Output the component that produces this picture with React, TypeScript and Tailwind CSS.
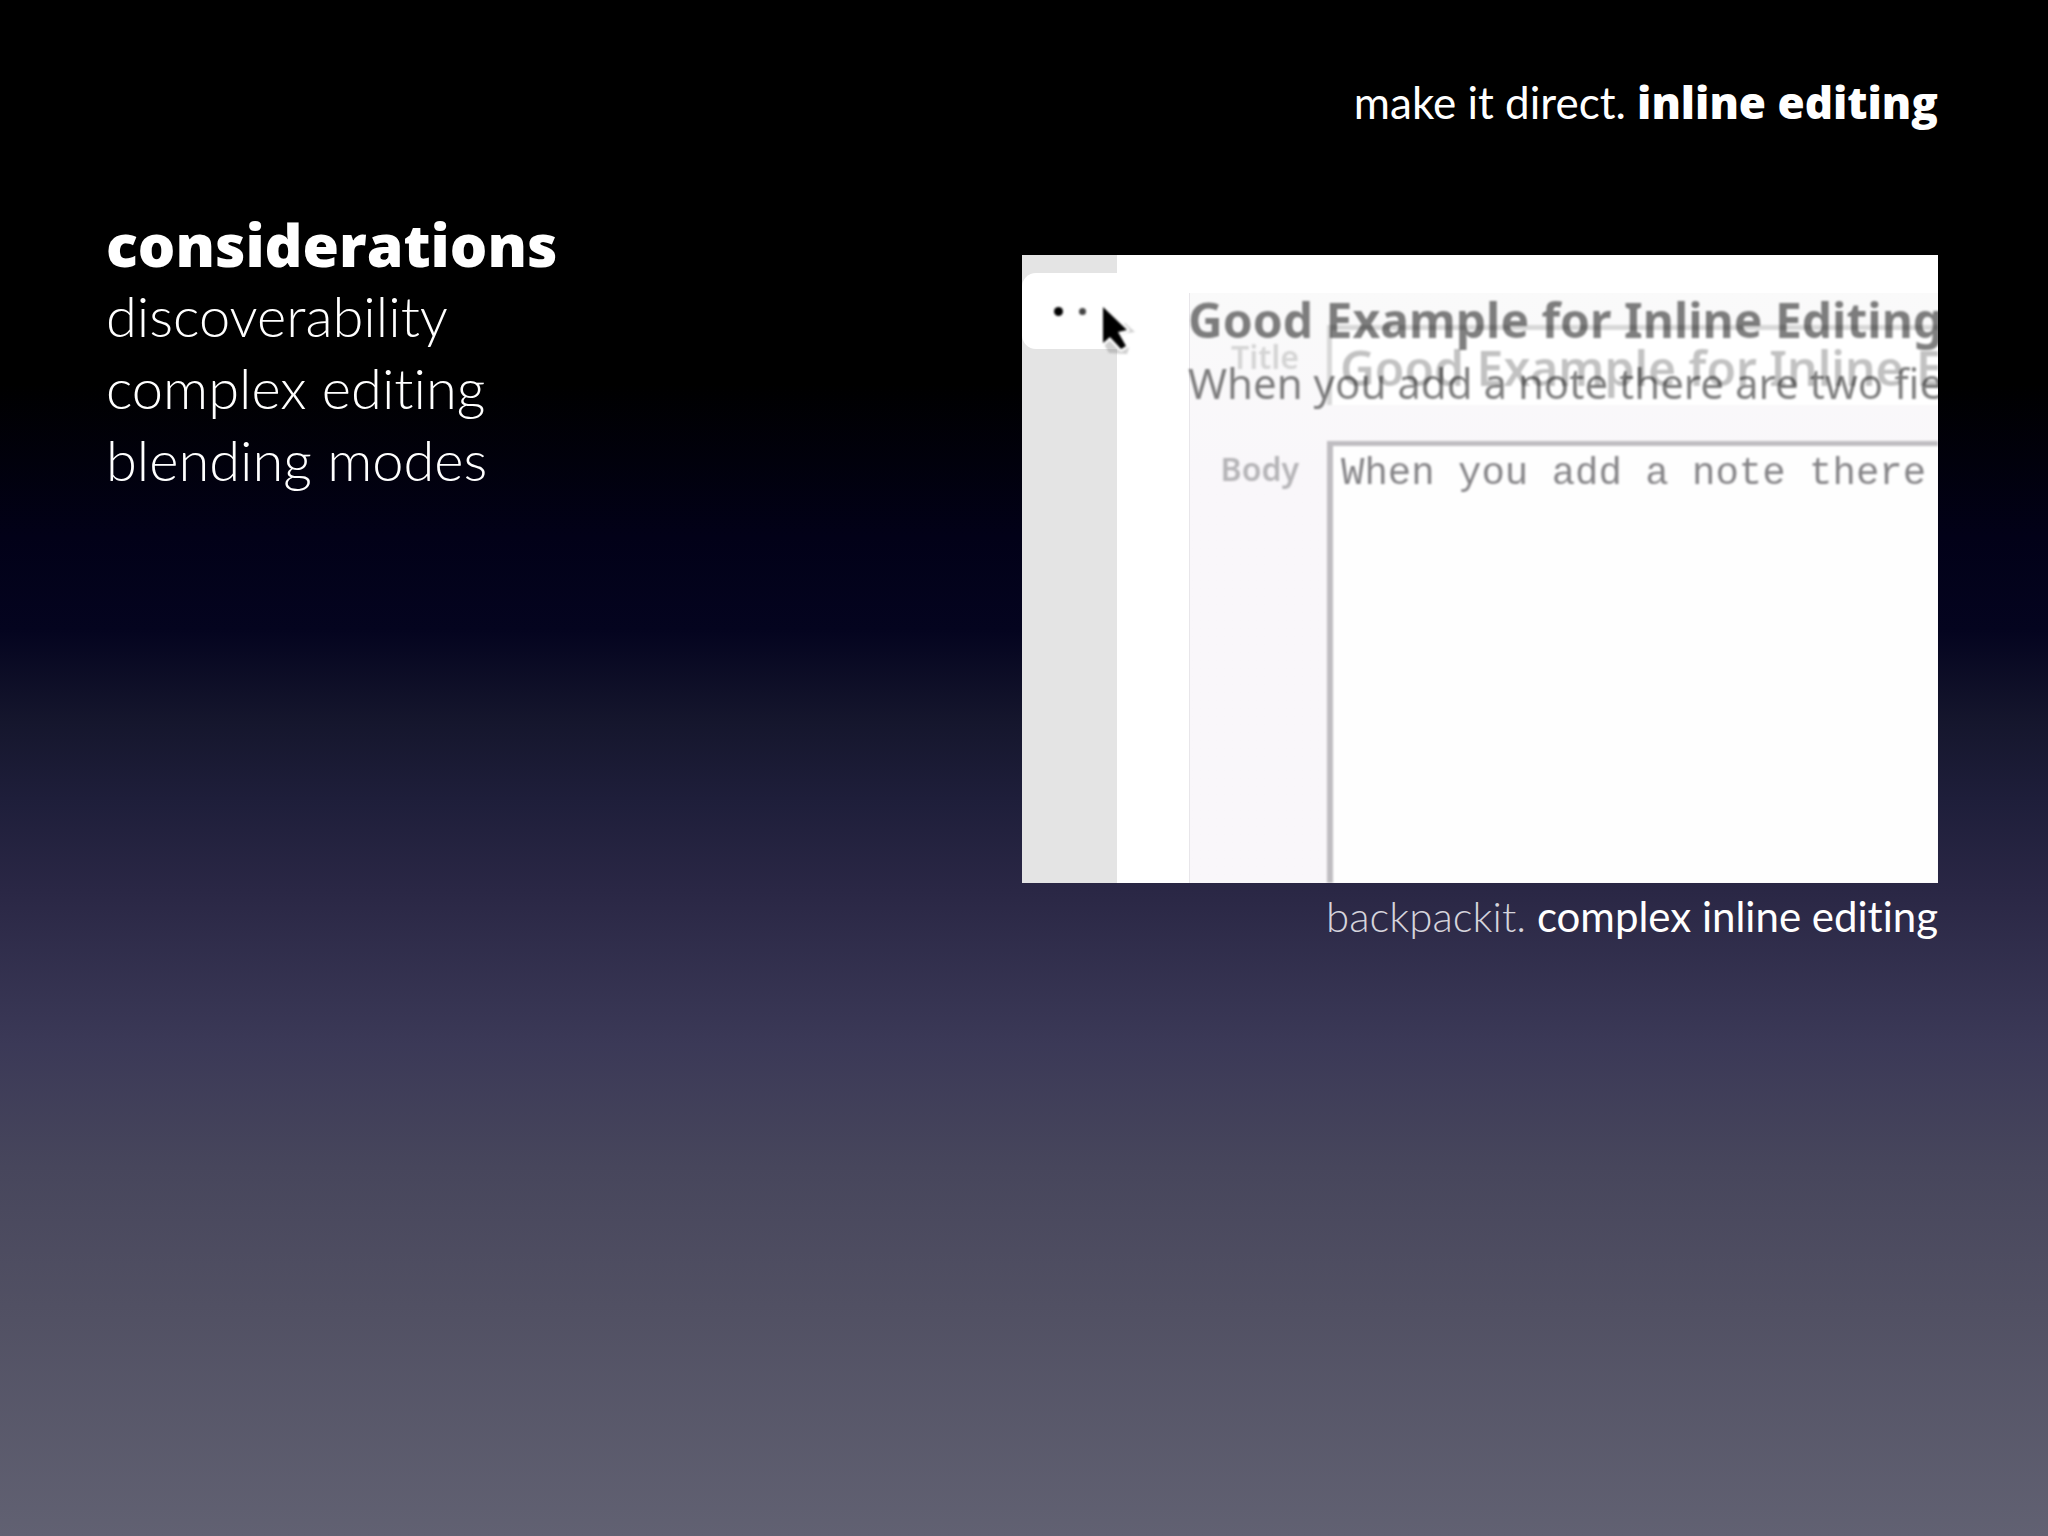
const considerations = ['discoverability', 'complex editing', 'blending modes'];

const Cursor = () => (
  <svg viewBox="0 0 36 52" className="h-[52px] w-9 blur-[1px]" aria-hidden="true">
    <path d="M0 34l8 14 18 1 2-6-8-14 14-2-10-9z" fill="#777" opacity="0.35" />
    <path
      d="M2 2v36l7-6 11 12 5-3-8-14 9-2z"
      fill="#000"
      stroke="#fff"
      strokeWidth="5"
      strokeLinejoin="round"
      paintOrder="stroke"
    />
  </svg>
);

const SlideHeader = () => (
  <header className="text-right text-[44px] leading-[56px]">
    make it direct.{' '}
    <strong className="font-['Open_Sans',sans-serif] font-extrabold">inline editing</strong>
  </header>
);

const Considerations = () => (
  <section className="text-[56px] leading-[72px]">
    <h1 className="font-['Open_Sans',sans-serif] text-[59px] leading-[72px] font-extrabold">considerations</h1>
    <ul className="font-light">
      {considerations.map((item) => (
        <li key={item}>{item}</li>
      ))}
    </ul>
  </section>
);

const VideoFrame = () => (
  <div className="relative flex aspect-[916/628] overflow-hidden bg-white font-['Noto_Sans',sans-serif]">
    <div className="w-[95px] shrink-0 bg-[#e4e4e4] pt-[18px]">
      <div className="flex h-[76px] items-center gap-4 rounded-l-[14px] bg-white pl-8">
        <span className="size-[9px] rounded-full bg-black blur-[1px]" />
        <span className="size-[7px] rounded-full bg-[#444] blur-[1px]" />
      </div>
    </div>

    {/* edit form, fading in */}
    <form className="mt-[38px] ml-[72px] flex min-w-0 flex-1 flex-col border-l border-[#e8e6ea] bg-linear-to-b from-[#fafafa] to-[#f9f7fa] to-30%">
      <div className="mt-8 flex h-20 shrink-0">
        <label
          htmlFor="note-title"
          className="w-[137px] shrink-0 pt-3 pr-7 text-right text-[32px] leading-10 font-semibold text-[#d4d4d4] blur-[1px]"
        >
          Title
        </label>
        <input
          id="note-title"
          defaultValue="Good Example for Inline Editing"
          className="min-w-0 flex-1 border-t-[5px] border-l-[5px] border-[#d8d8d8] bg-white pl-2 text-[48px] leading-[60px] font-semibold text-[#c2c2c2] blur-[1px]"
        />
      </div>
      <div className="mt-9 flex min-h-0 flex-1">
        <label
          htmlFor="note-body"
          className="w-[137px] shrink-0 pt-2 pr-7 text-right text-[32px] leading-10 font-semibold text-[#b5b4b7] blur-[1px]"
        >
          Body
        </label>
        <textarea
          id="note-body"
          defaultValue="When you add a note there"
          className="min-w-0 flex-1 resize-none overflow-hidden border-t-[5px] border-l-[6px] border-[#bfbdc1] bg-[#fefefe] pt-1 pl-2 font-['Liberation_Mono',monospace] text-[39px] leading-[48px] whitespace-pre text-[#868588] blur-[1px]"
        />
      </div>
    </form>

    {/* saved note, fading out over the form */}
    <div className="absolute top-[35px] left-[166px] whitespace-nowrap text-black/50 blur-[1px]">
      <h2 className="text-[48px] leading-[60px] font-bold">Good Example for Inline Editing</h2>
      <p className="text-[42px] leading-[66px]">When you add a note there are two fie</p>
    </div>

    <div className="absolute top-[50px] left-[79px]">
      <Cursor />
    </div>
  </div>
);

export default function App() {
  return (
    <main className="min-h-screen bg-[linear-gradient(to_bottom,#000_0%,#000_25%,#020118_35%,#04041f_41%,#15162d_47%,#1e1e3a_52%,#2a2745_58%,#3b3957_68%,#47465c_76%,#515063_85%,#616172_100%)] pt-[74px] pr-[110px] pb-20 pl-[106px] font-[Lato,sans-serif] text-white [font-variant-ligatures:none]">
      <SlideHeader />
      <div className="mt-[78px] grid grid-cols-2">
        <Considerations />
        <figure className="mt-[47px]">
          <VideoFrame />
          <figcaption className="mt-[3px] text-right text-[42px] leading-[60px]">
            <span className="font-light text-[#d5d4dc]">backpackit.</span> complex inline editing
          </figcaption>
        </figure>
      </div>
    </main>
  );
}
